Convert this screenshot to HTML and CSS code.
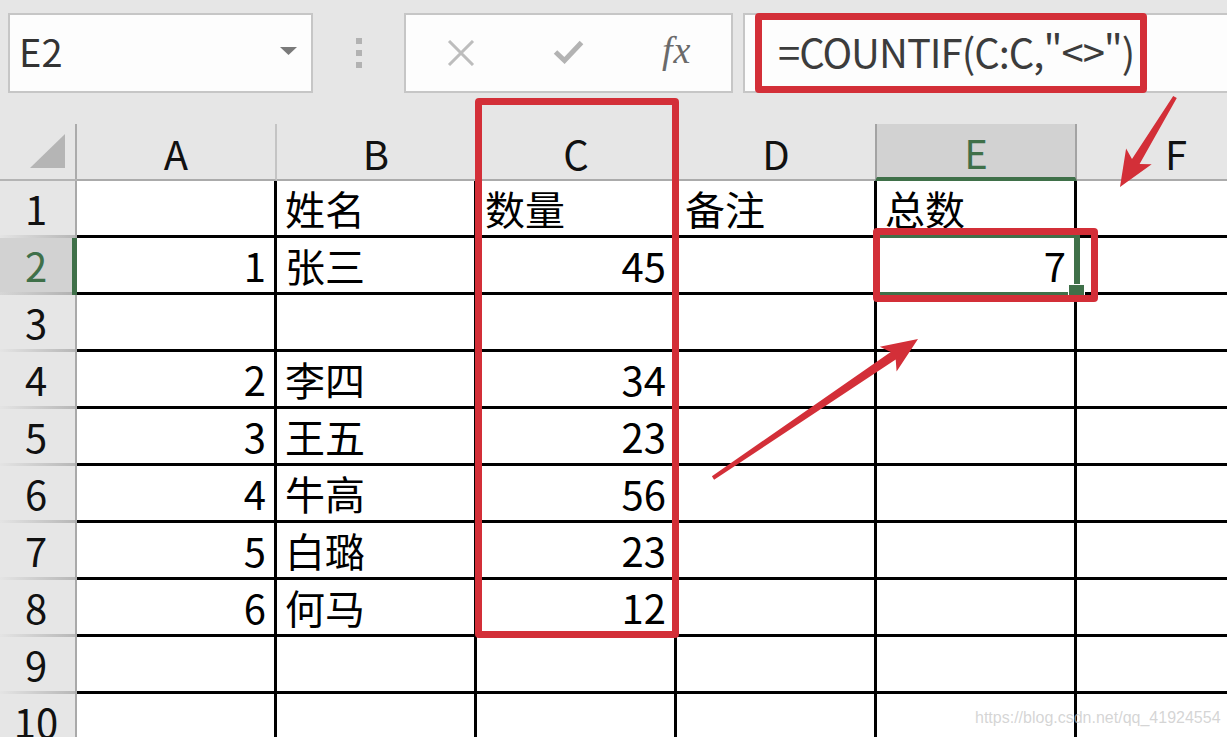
FILE: index.html
```html
<!DOCTYPE html>
<html lang="zh-CN">
<head>
<meta charset="utf-8">
<title>COUNTIF</title>
<link rel="stylesheet" href="styles.css">
</head>
<body>
<div class="app">
  <div class="toolbar">
    <div class="namebox">
      <span class="ref">E2</span>
      <svg class="caret" width="17" height="8" viewBox="0 0 17 8"><polygon points="0,0 17,0 8.5,8" fill="#7a7a7a"/></svg>
    </div>
    <div class="grip"><i></i><i></i><i></i></div>
    <div class="fxbtns">
      <svg class="ico-x" width="28" height="26" viewBox="0 0 28 26"><path d="M2 1 L26 25 M26 1 L2 25" stroke="#bdbdbd" stroke-width="3" fill="none"/></svg>
      <svg class="ico-ok" width="31" height="24" viewBox="0 0 31 24"><path d="M2.5 12 L11.5 20.5 L28.5 2.5" stroke="#b3b3b3" stroke-width="5" fill="none" stroke-linejoin="miter"/></svg>
      <span class="fx">fx</span>
    </div>
    <div class="formula">=COUNTIF(C:C,"&lt;&gt;")</div>
  </div>

  <div class="sheet">
    <div class="corner"><svg width="35" height="34" viewBox="0 0 35 34"><polygon points="35,0 35,34 0,34" fill="#b5b5b5"/></svg></div>
    <div class="ch">A</div>
    <div class="ch">B</div>
    <div class="ch">C</div>
    <div class="ch">D</div>
    <div class="ch sel">E</div>
    <div class="ch last">F</div>

    <div class="rh">1</div>
    <div class="c"></div><div class="c">姓名</div><div class="c">数量</div><div class="c">备注</div><div class="c">总数</div><div class="c last"></div>

    <div class="rh sel">2</div>
    <div class="c n">1</div><div class="c">张三</div><div class="c n">45</div><div class="c"></div><div class="c n active">7<span class="selbox"><span class="handle"></span></span></div><div class="c last"></div>

    <div class="rh">3</div>
    <div class="c"></div><div class="c"></div><div class="c"></div><div class="c"></div><div class="c"></div><div class="c last"></div>

    <div class="rh">4</div>
    <div class="c n">2</div><div class="c">李四</div><div class="c n">34</div><div class="c"></div><div class="c"></div><div class="c last"></div>

    <div class="rh">5</div>
    <div class="c n">3</div><div class="c">王五</div><div class="c n">23</div><div class="c"></div><div class="c"></div><div class="c last"></div>

    <div class="rh">6</div>
    <div class="c n">4</div><div class="c">牛高</div><div class="c n">56</div><div class="c"></div><div class="c"></div><div class="c last"></div>

    <div class="rh">7</div>
    <div class="c n">5</div><div class="c">白璐</div><div class="c n">23</div><div class="c"></div><div class="c"></div><div class="c last"></div>

    <div class="rh">8</div>
    <div class="c n">6</div><div class="c">何马</div><div class="c n">12</div><div class="c"></div><div class="c"></div><div class="c last"></div>

    <div class="rh">9</div>
    <div class="c"></div><div class="c"></div><div class="c"></div><div class="c"></div><div class="c"></div><div class="c last"></div>

    <div class="rh">10</div>
    <div class="c"></div><div class="c"></div><div class="c"></div><div class="c"></div><div class="c"></div><div class="c last"></div>
  </div>

  <div class="mark mark-formula"></div>
  <div class="mark mark-col"></div>
  <div class="mark mark-cell"></div>

  <svg class="arrows" width="1227" height="737" viewBox="0 0 1227 737">
    <polygon fill="#d32f38" points="1176.8,98.1 1139.6,163.9 1151.7,164.3 1120,187 1126.1,148.5 1132.0,159.1 1173.2,95.9"/>
    <polygon fill="#d32f38" points="714.1,479.7 895.7,359.5 896.6,371.6 918,339 879.8,346.8 890.7,352.1 711.9,476.3"/>
  </svg>

  <div class="watermark">https://blog.csdn.net/qq_41924554</div>
</div>
</body>
</html>
```

FILE: styles.css
```css
* { box-sizing: border-box; }

html, body {
  margin: 0;
  padding: 0;
  background: #ffffff;
  overflow: hidden;
}

.app {
  position: relative;
  width: 1227px;
  height: 737px;
  overflow: hidden;
  font-family: "Noto Sans CJK SC", "Noto Sans", sans-serif;
  color: #000;
}

/* ---------- toolbar ---------- */
.toolbar {
  height: 124px;
  background: #e6e6e6;
  display: flex;
  align-items: flex-start;
  padding: 13px 0 0 8px;
}

.namebox {
  width: 305px;
  height: 80px;
  background: #fdfdfd;
  border: 2px solid #c6c6c6;
  display: flex;
  align-items: center;
  justify-content: space-between;
  padding: 0 14px 0 9px;
}

.ref {
  font-size: 38px;
  color: #333;
  line-height: 1;
  padding-bottom: 4px;
}

.caret { margin-bottom: 4px; }

.grip {
  width: 6px;
  margin: 25px 42px 0 43px;
  display: flex;
  flex-direction: column;
  gap: 6px;
}

.grip i {
  display: block;
  width: 6px;
  height: 6px;
  background: #b2b2b2;
}

.fxbtns {
  width: 329px;
  height: 80px;
  background: #fdfdfd;
  border: 2px solid #c6c6c6;
  display: flex;
  align-items: center;
  padding-left: 41px;
  gap: 78px;
}

.ico-x { margin-top: -1px; }
.ico-ok { margin-top: -3px; }

.fx {
  font-family: "Liberation Serif", "DejaVu Serif", serif;
  font-style: italic;
  font-size: 38px;
  color: #6a6a6a;
  line-height: 1;
  margin-top: -6px;
  letter-spacing: 1px;
}

.formula {
  flex: 1;
  margin-left: 10px;
  margin-right: -4px;
  height: 80px;
  background: #fdfdfd;
  border: 2px solid #c6c6c6;
  padding-left: 33px;
  font-size: 40px;
  letter-spacing: -1px;
  color: #3c3c3c;
  line-height: 72px;
  white-space: nowrap;
}

/* ---------- sheet ---------- */
.sheet {
  display: grid;
  grid-template-columns: 77px repeat(6, 200px);
  grid-template-rows: 57px;
  grid-auto-rows: 57px;
  width: 1277px;
  background: #fff;
}

.corner {
  background: #e6e6e6;
  border-bottom: 2px solid #b4b4b4;
  box-shadow: inset -2px 0 0 #ababab;
  display: flex;
  justify-content: flex-end;
  align-items: flex-end;
  padding: 0 12px 11px 0;
}

.ch {
  background: #e6e6e6;
  border-right: 2px solid #c4c4c4;
  border-bottom: 2px solid #ababab;
  text-align: center;
  font-size: 40px;
  line-height: 58px;
  color: #111;
}

.ch.sel {
  background: #d2d2d2;
  color: #3f7049;
  border-left: 2px solid #a3a3a3;
  border-right: 2px solid #a3a3a3;
  border-bottom: 4px solid #3f7049;
  margin-left: -2px;
  line-height: 56px;
}

.rh {
  background:
    linear-gradient(to right, #e4e4e4, #b6b6b6) left bottom / 100% 3px no-repeat,
    #e6e6e6;
  box-shadow: inset -2px 0 0 #a9a9a9;
  padding-right: 5px;
  text-align: center;
  font-size: 40px;
  line-height: 54px;
  color: #111;
}

.rh.sel {
  background:
    linear-gradient(to right, #d6d6d6, #b0b0b0) left bottom / 100% 3px no-repeat,
    #d2d2d2;
  box-shadow: inset -5px 0 0 #3f7049;
  color: #3f7049;
}

.c {
  border-right: 3px solid #000;
  border-bottom: 3px solid #000;
  font-size: 40px;
  line-height: 54px;
  padding: 0 8px;
  white-space: nowrap;
}

.c.n { text-align: right; }

.c.active { position: relative; }

.selbox {
  position: absolute;
  left: -3px;
  top: -3px;
  right: -6px;
  bottom: -3px;
  border: 3px solid #3f7049;
  border-right-width: 6px;
  pointer-events: none;
}

.handle {
  position: absolute;
  right: -10px;
  bottom: -5px;
  width: 15px;
  height: 12px;
  background: #3f7049;
  outline: 1px solid #ffffff;
}

/* ---------- annotations ---------- */
.mark {
  position: absolute;
  border: 7px solid #d32f38;
  border-radius: 4px;
}

.mark-formula { left: 755px; top: 13px; width: 392px; height: 80px; }
.mark-col     { left: 475px; top: 98px; width: 204px; height: 540px; }
.mark-cell    { left: 873px; top: 228px; width: 225px; height: 74px; }

.arrows {
  position: absolute;
  left: 0;
  top: 0;
  pointer-events: none;
}

.watermark {
  position: absolute;
  left: 975px;
  top: 709px;
  font-family: "Liberation Sans", Arial, sans-serif;
  font-size: 16px;
  color: rgba(195, 195, 195, 0.7);
  white-space: nowrap;
}
```
